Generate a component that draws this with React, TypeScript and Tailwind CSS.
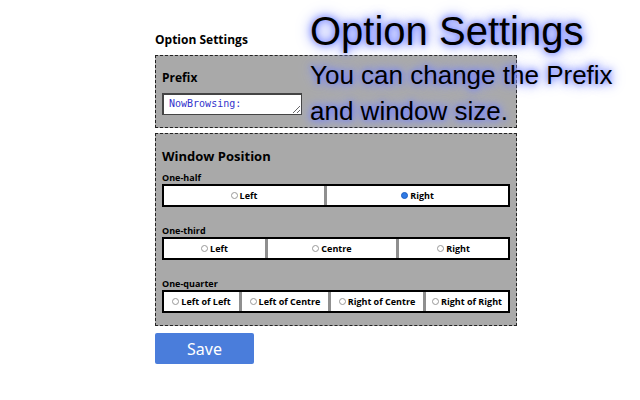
import React from 'react';

function Radio({ checked }: { checked?: boolean }) {
  return checked ? (
    <span className="inline-block w-[7px] h-[7px] rounded-full bg-[#2f7ae5] border border-[#1d5fc2] mr-[1px]" />
  ) : (
    <span className="inline-block w-[7px] h-[7px] rounded-full border border-[#999] bg-white mr-[1px]" />
  );
}

type Cell = { text: string; w: string };

function OptionRow({ label, cells, checked }: { label: string; cells: Cell[]; checked?: number }) {
  return (
    <div>
      <div className="text-[9px] font-bold leading-[12px] text-black">{label}</div>
      <div className="flex border-2 border-black bg-white h-[23px]">
        {cells.map((c, i) => (
          <div
            key={c.text}
            className={
              c.w +
              ' flex items-center justify-center gap-[1px] text-[9px] font-bold text-black ' +
              (i > 0 ? 'border-l-[3px] border-[#8f8f8f]' : '')
            }
          >
            <Radio checked={checked === i} />
            {c.text}
          </div>
        ))}
      </div>
    </div>
  );
}

export default function App() {
  return (
    <div className="relative w-[640px] h-[400px] bg-white overflow-hidden font-['Open_Sans','Noto_Sans',sans-serif]">
      <div className="pl-[155px] pt-[31px] w-[517px]">
        <h1 className="text-[12px] font-bold leading-[17px] text-black mb-[7px]">Option Settings</h1>

        <div className="border border-dashed border-[#222] bg-[#a9a9a9] h-[73px] px-[6px] pt-[14px]">
          <div className="text-[12px] font-bold leading-[16px] text-black mb-[7px]">Prefix</div>
          <textarea
            readOnly
            value="NowBrowsing:"
            className="block w-[140px] h-[22px] bg-white border border-t-2 border-l-2 border-[#444] text-[10px] leading-[14px] px-[5px] py-[2px] text-[#3333cc] font-['DejaVu_Sans_Mono',monospace] resize-y overflow-hidden"
          />
        </div>

        <div className="mt-[5px] border border-dashed border-[#222] bg-[#a9a9a9] h-[193px] px-[6px] pt-[14px]">
          <div className="text-[13px] font-bold leading-[17px] text-black mb-[7px]">Window Position</div>
          <div className="flex flex-col gap-[18px]">
            <OptionRow
              label="One-half"
              checked={1}
              cells={[
                { text: 'Left', w: 'w-[160px]' },
                { text: 'Right', w: 'flex-1' },
              ]}
            />
            <OptionRow
              label="One-third"
              cells={[
                { text: 'Left', w: 'w-[101px]' },
                { text: 'Centre', w: 'w-[131px]' },
                { text: 'Right', w: 'flex-1' },
              ]}
            />
            <OptionRow
              label="One-quarter"
              cells={[
                { text: 'Left of Left', w: 'w-[75px]' },
                { text: 'Left of Centre', w: 'w-[89px]' },
                { text: 'Right of Centre', w: 'w-[95px]' },
                { text: 'Right of Right', w: 'flex-1' },
              ]}
            />
          </div>
        </div>

        <button className="mt-[7px] w-[99px] h-[31px] rounded-[2px] bg-[#4a7ddb] text-white text-[16px] font-['Noto_Sans',sans-serif]">
          Save
        </button>
      </div>

      <div className="absolute left-[310px] top-[4px] text-black font-['Liberation_Sans',sans-serif] [text-shadow:0_0_6px_#6272ff,0_0_12px_#8391ff,0_0_18px_#b0b9ff]">
        <div className="text-[40px] leading-[54px]">Option Settings</div>
        <div className="text-[26px] leading-[36px] -mt-[1px]">You can change the Prefix</div>
        <div className="text-[26px] leading-[36px]">and window size.</div>
      </div>
    </div>
  );
}
